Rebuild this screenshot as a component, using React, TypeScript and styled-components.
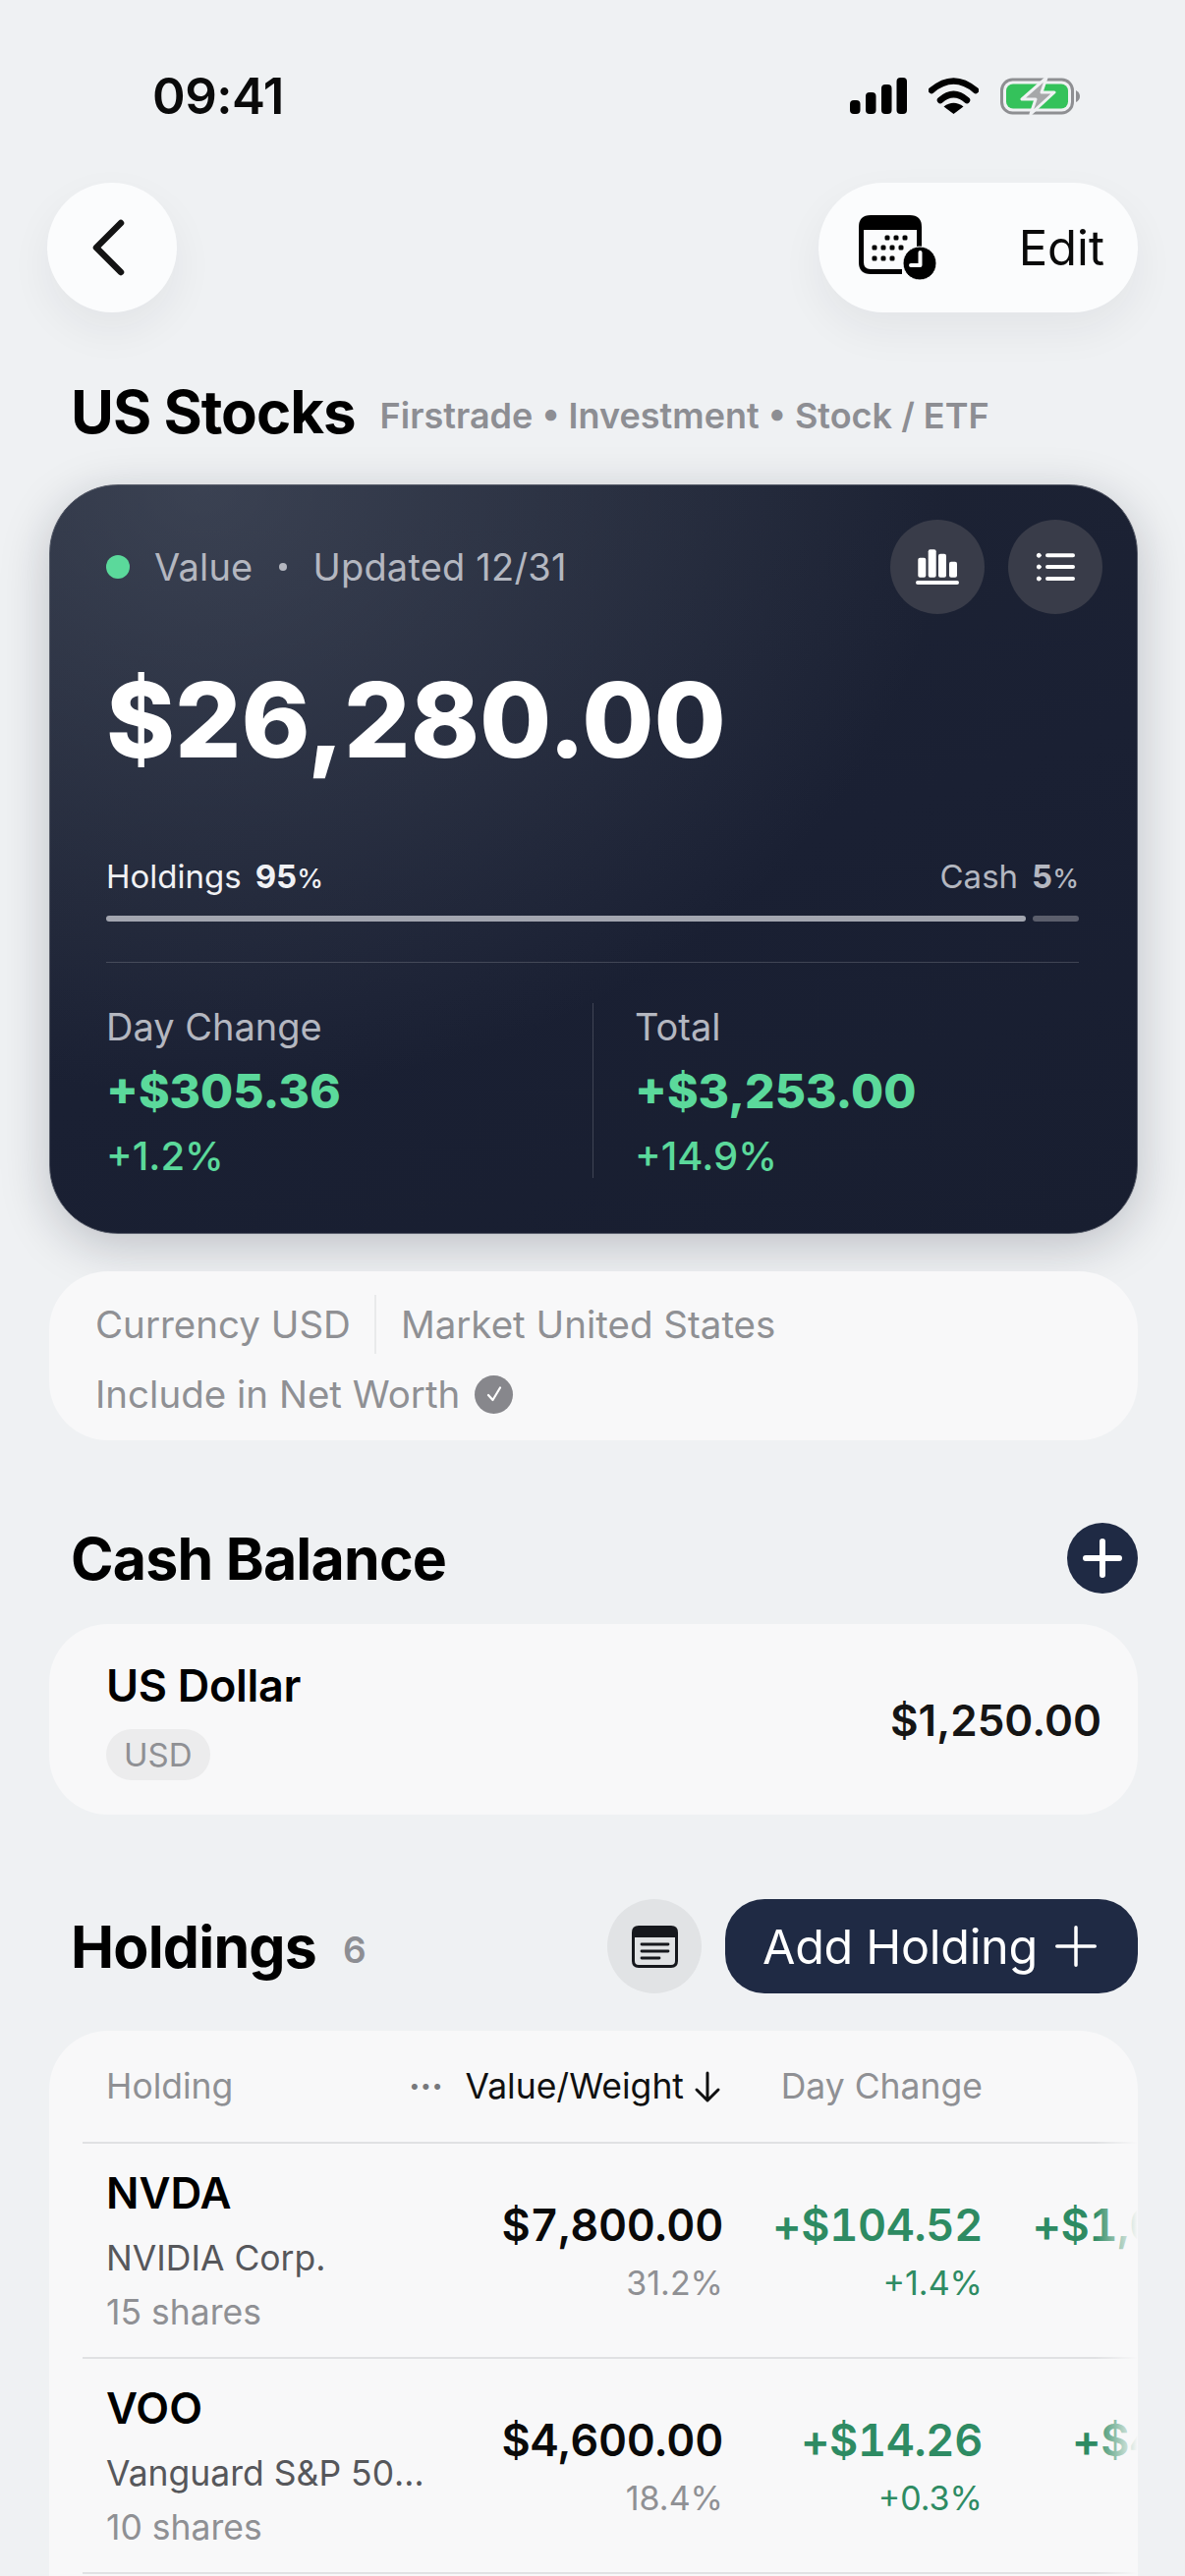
import styled, { createGlobalStyle } from "styled-components";

const GlobalStyle = createGlobalStyle`
  html, body {
    margin: 0;
    padding: 0;
    background: #eff1f3;
  }
  * {
    box-sizing: border-box;
  }
`;

const Page = styled.div`
  position: relative;
  width: 1206px;
  height: 2622px;
  overflow: hidden;
  padding: 67px 48px 0 50px;
  background: #eff1f3;
  font-family: Inter, "Noto Sans", sans-serif;
  color: #000;
`;

const StatusBar = styled.div`
  display: flex;
  align-items: center;
  justify-content: space-between;
  height: 60px;
  padding: 0 58px 0 105px;
`;

const Time = styled.div`
  font-size: 51px;
  font-weight: 600;
  letter-spacing: -0.5px;
  color: #0a0a0a;
`;

const StatusIcons = styled.div`
  display: flex;
  align-items: center;
  gap: 22px;
`;

const NavRow = styled.div`
  display: flex;
  align-items: center;
  justify-content: space-between;
  margin: 59px 0 0 -2px;
`;

const RoundButton = styled.div`
  display: flex;
  align-items: center;
  justify-content: center;
  width: 132px;
  height: 132px;
  padding-right: 6px;
  border-radius: 50%;
  background: #fbfcfd;
  box-shadow: 0 18px 44px rgba(30, 35, 50, 0.06);
`;

const PillButton = styled.div`
  display: flex;
  align-items: center;
  justify-content: space-between;
  width: 325px;
  height: 132px;
  padding: 0 34px 0 41px;
  border-radius: 66px;
  background: #fbfcfd;
  box-shadow: 0 18px 44px rgba(30, 35, 50, 0.06);
  font-size: 49px;
  color: #0a0a0a;
`;

const TitleRow = styled.div`
  display: flex;
  align-items: center;
  gap: 25px;
  margin: 64px 0 0 22px;
  height: 75px;
`;

const Title = styled.div`
  font-size: 60px;
  font-weight: 700;
  letter-spacing: -1px;
  line-height: 75px;
  white-space: nowrap;
`;

const Subtitle = styled.div`
  margin-top: 6px;
  font-size: 36px;
  font-weight: 600;
  color: #8d8e93;
  white-space: nowrap;
`;

const ValueCard = styled.div`
  margin-top: 36px;
  height: 763px;
  padding: 35px 35px 0 57px;
  border-radius: 70px;
  background:
    radial-gradient(ellipse 760px 620px at 14% 0%, rgba(90, 98, 115, 0.48), rgba(90, 98, 115, 0) 100%),
    linear-gradient(160deg, #1e2434 0%, #1a2033 55%, #181e30 100%);
  border: 1px solid #5b606d;
  box-shadow: 0 12px 50px rgba(20, 25, 40, 0.22);
  color: #fff;
`;

const CardTop = styled.div`
  display: flex;
  align-items: center;
  justify-content: space-between;
  height: 96px;
`;

const CardMeta = styled.div`
  display: flex;
  align-items: center;
  font-size: 38px;
  letter-spacing: 0.2px;
  color: #b4b7c0;
`;

const Dot = styled.span`
  width: 24px;
  height: 24px;
  margin-right: 25px;
  border-radius: 50%;
  background: #5bd99b;
`;

const MetaSep = styled.span`
  width: 8px;
  height: 8px;
  margin: 0 26px 0 27px;
  border-radius: 50%;
  background: #b4b7c0;
`;

const CardActions = styled.div`
  display: flex;
  gap: 24px;
`;

const GlassButton = styled.div`
  display: flex;
  align-items: center;
  justify-content: center;
  width: 96px;
  height: 96px;
  border-radius: 50%;
  background: #393c49;
`;

const BigValue = styled.div`
  margin-top: 44px;
  font-size: 106px;
  font-weight: 800;
  line-height: 128px;
`;

const AllocRow = styled.div`
  display: flex;
  align-items: center;
  justify-content: space-between;
  margin: 74px 1px 0 0;
  font-size: 33px;
  line-height: 42px;
  padding-right: 23px;
`;

const AllocLabel = styled.span<{ $dim?: boolean }>`
  color: ${(p) => (p.$dim ? "#b4b7c0" : "#f0f1f4")};
  b {
    margin-left: 14px;
    font-weight: 700;
  }
  small {
    font-size: 27px;
    font-weight: 500;
  }
`;

const AllocBar = styled.div`
  display: flex;
  gap: 7px;
  margin: 16px 24px 0 0;
  height: 6px;
`;

const AllocFill = styled.div<{ $grow: number; $colour: string }>`
  flex: ${(p) => p.$grow} 0 0;
  border-radius: 3px;
  background: ${(p) => p.$colour};
`;

const CardDivider = styled.div`
  height: 1px;
  margin: 41px 24px 0 0;
  background: rgba(255, 255, 255, 0.17);
`;

const Stats = styled.div`
  display: grid;
  grid-template-columns: 495px 1fr;
  margin: 41px 24px 0 0;
  height: 175px;
`;

const Stat = styled.div<{ $split?: boolean }>`
  ${(p) => (p.$split ? "border-left: 1px solid rgba(255,255,255,0.17); padding-left: 42px;" : "")}
`;

const StatLabel = styled.div`
  margin-top: 1px;
  font-size: 38px;
  line-height: 46px;
  color: #b4b7c0;
`;

const StatValue = styled.div`
  margin-top: 14px;
  font-size: 48px;
  font-weight: 800;
  line-height: 58px;
  color: #5bd99b;
`;

const StatPct = styled.div`
  margin-top: 15px;
  font-size: 40px;
  font-weight: 500;
  line-height: 44px;
  color: #5bd99b;
`;

const InfoCard = styled.div`
  margin-top: 38px;
  height: 172px;
  padding: 24px 48px 0 47px;
  border-radius: 60px;
  background: #f8f8f9;
  font-size: 38.5px;
  color: #8f9094;
`;

const InfoRow = styled.div`
  display: flex;
  align-items: center;
  height: 60px;
  & + & {
    margin-top: 11px;
  }
`;

const InfoDivider = styled.span`
  width: 2px;
  height: 60px;
  margin: 0 25px 0 24px;
  background: #e9eaeb;
`;

const CheckBadge = styled.span`
  display: inline-flex;
  align-items: center;
  justify-content: center;
  width: 39px;
  height: 39px;
  margin-left: 15px;
  border-radius: 50%;
  background: #87878c;
`;

const SectionHead = styled.div<{ $top: number }>`
  display: flex;
  align-items: center;
  justify-content: space-between;
  margin: ${(p) => p.$top}px 0 0 22px;
`;

const SectionTitle = styled.div`
  font-size: 59px;
  font-weight: 700;
  letter-spacing: -0.8px;
  white-space: nowrap;
`;

const AddCircle = styled.div`
  display: flex;
  align-items: center;
  justify-content: center;
  width: 72px;
  height: 72px;
  border-radius: 50%;
  background: #1f2a44;
`;

const CashCard = styled.div`
  display: flex;
  align-items: center;
  justify-content: space-between;
  margin-top: 31px;
  height: 194px;
  padding: 0 37px 0 58px;
  border-radius: 60px;
  background: #f8f8f9;
`;

const CashName = styled.div`
  font-size: 45px;
  font-weight: 600;
  line-height: 54px;
  letter-spacing: -0.3px;
`;

const Chip = styled.span`
  display: inline-block;
  margin-top: 17px;
  height: 52px;
  padding: 0 18px;
  border-radius: 26px;
  background: #ececed;
  font-size: 33px;
  line-height: 52px;
  color: #8f9094;
`;

const CashAmount = styled.div`
  margin-top: 2px;
  font-size: 44px;
  font-weight: 600;
  color: #151515;
`;

const HeadLeft = styled.div`
  display: flex;
  align-items: center;
`;

const CountLabel = styled.span`
  margin: 6px 0 0 27px;
  font-size: 37px;
  font-weight: 600;
  color: #8d8e93;
`;

const HeadRight = styled.div`
  display: flex;
  align-items: center;
  gap: 24px;
`;

const DocButton = styled.div`
  display: flex;
  align-items: center;
  justify-content: center;
  width: 96px;
  height: 96px;
  border-radius: 50%;
  background: #e1e3e5;
`;

const AddButton = styled.div`
  display: flex;
  align-items: center;
  justify-content: space-between;
  width: 420px;
  height: 96px;
  padding: 0 42px 0 38px;
  border-radius: 40px;
  background: #1f2a44;
  color: #fff;
  font-size: 48.5px;
  letter-spacing: -0.3px;
`;

const TableCard = styled.div`
  position: relative;
  margin-top: 38px;
  height: 640px;
  padding-left: 34px;
  border-radius: 60px 60px 0 0;
  background: #f8f8f9;
  overflow: hidden;
`;

const Fade = styled.div`
  position: absolute;
  top: 112px;
  right: 0;
  bottom: 0;
  width: 44px;
  background: linear-gradient(90deg, rgba(248, 248, 249, 0), #f8f8f9);
`;

const TableRow = styled.div<{ $head?: boolean }>`
  display: grid;
  grid-template-columns: 330px 298px 264px 305px;
  width: 1221px;
  height: ${(p) => (p.$head ? "115px" : "219px")};
  padding-left: 24px;
  border-bottom: 2px solid #e0e1e3;
  align-items: center;
`;

const HeadCell = styled.div<{ $dark?: boolean; $right?: boolean }>`
  display: flex;
  align-items: center;
  justify-content: ${(p) => (p.$right ? "flex-end" : "flex-start")};
  min-width: 0;
  font-size: 35.5px;
  color: ${(p) => (p.$dark ? "#101010" : "#8f9094")};
  white-space: nowrap;
  svg {
    flex-shrink: 0;
  }
`;

const Dots = styled.span`
  flex-shrink: 0;
  margin-right: 22px;
  font-size: 19px;
  line-height: 1;
  letter-spacing: 1px;
  color: #77787c;
`;

const NameCell = styled.div`
  min-width: 0;
`;

const Ticker = styled.div`
  font-size: 44px;
  font-weight: 600;
  line-height: 54px;
`;

const FullName = styled.div`
  margin-top: 18px;
  font-size: 35.5px;
  line-height: 44px;
  color: #56575b;
  white-space: nowrap;
  overflow: hidden;
  text-overflow: ellipsis;
`;

const Shares = styled.div`
  margin-top: 11px;
  font-size: 35.5px;
  line-height: 44px;
  color: #8f9094;
`;

const NumCell = styled.div`
  text-align: right;
  white-space: nowrap;
`;

const NumMain = styled.div<{ $gain?: boolean }>`
  font-size: 45px;
  font-weight: 600;
  line-height: 56px;
  letter-spacing: -0.3px;
  font-variant-numeric: tabular-nums;
  color: ${(p) => (p.$gain ? "#2e8b63" : "#0a0a0a")};
`;

const NumSub = styled.div<{ $gain?: boolean }>`
  margin-top: 11px;
  font-size: 34px;
  line-height: 40px;
  color: ${(p) => (p.$gain ? "#2e8b63" : "#8f9094")};
`;

const holdings = [
  {
    ticker: "NVDA",
    name: "NVIDIA Corp.",
    shares: "15 shares",
    value: "$7,800.00",
    weight: "31.2%",
    day: "+$104.52",
    dayPct: "+1.4%",
    total: "+$1,020.00",
    totalPct: "+15.0%",
  },
  {
    ticker: "VOO",
    name: "Vanguard S&P 500 ETF",
    shares: "10 shares",
    value: "$4,600.00",
    weight: "18.4%",
    day: "+$14.26",
    dayPct: "+0.3%",
    total: "+$420.00",
    totalPct: "+10.0%",
  },
];

function SignalIcon() {
  return (
    <svg width="58" height="37" viewBox="0 0 58 37">
      <rect x="0" y="23" width="10.5" height="14" rx="4" fill="#000" />
      <rect x="16" y="15" width="10.5" height="22" rx="4" fill="#000" />
      <rect x="32" y="7" width="10.5" height="30" rx="4" fill="#000" />
      <rect x="47.5" y="0" width="10.5" height="37" rx="4" fill="#000" />
    </svg>
  );
}

function WifiIcon() {
  return (
    <svg width="51" height="37" viewBox="0 0 51 37" fill="none">
      <path d="M3 13 Q25.5 -6 48 13" stroke="#000" strokeWidth="6.5" strokeLinecap="round" />
      <path d="M12 23 Q25.5 11 39 23" stroke="#000" strokeWidth="6.5" strokeLinecap="round" />
      <path d="M25.5 37 L15.5 29.5 Q25.5 22 35.5 29.5 Z" fill="#000" />
    </svg>
  );
}

function BatteryIcon() {
  return (
    <svg width="82" height="39" viewBox="0 0 82 39" fill="none">
      <rect x="1.5" y="3" width="72" height="34" rx="11" stroke="#8e8f92" strokeWidth="3" />
      <rect x="6" y="7.5" width="63" height="25" rx="7" fill="#34c25b" />
      <path d="M77 14 Q81 16 81 20 Q81 24 77 26 Z" fill="#8e8f92" />
      <path d="M47 1 L22 23 L36 23 L31 38 L55 16 L42 16 Z" fill="#a6a7a9" stroke="#eff1f3" strokeWidth="3" strokeLinejoin="round" />
    </svg>
  );
}

function CalendarClockIcon() {
  const dots = [
    [29, 23], [38, 23], [47, 23],
    [16, 33], [25, 33], [34, 33], [43, 33],
    [16, 44], [25, 44], [34, 44],
  ];
  return (
    <svg width="79" height="66" viewBox="0 0 79 66" fill="none">
      <path
        d="M12 0 H52 Q64 0 64 12 V32 H59 V15 H5 V48 Q5 55 12 55 H44 V60 H12 Q0 60 0 48 V12 Q0 0 12 0 Z"
        fill="#000"
      />
      {dots.map(([x, y]) => (
        <rect key={`${x}-${y}`} x={x - 2.5} y={y - 2.5} width="5" height="5" rx="1.5" fill="#000" />
      ))}
      <circle cx="62" cy="49" r="17" fill="#000" stroke="#fbfcfd" strokeWidth="1" />
      <path d="M62.5 38 V51 H53" stroke="#fbfcfd" strokeWidth="4" strokeLinecap="round" strokeLinejoin="round" />
    </svg>
  );
}

function BarsIcon() {
  return (
    <svg width="48" height="48" viewBox="0 0 48 48" fill="#fff">
      <rect x="4.3" y="14.7" width="8" height="20" rx="2" />
      <rect x="14.7" y="6.3" width="8" height="28.4" rx="2" />
      <rect x="25" y="10.7" width="8" height="24" rx="2" />
      <rect x="36" y="18.7" width="8" height="16" rx="2" />
      <rect x="2" y="38" width="44" height="4" rx="2" />
    </svg>
  );
}

function ListIcon() {
  return (
    <svg width="48" height="48" viewBox="0 0 48 48" fill="#fff" stroke="#fff" strokeLinecap="round">
      <circle cx="7.3" cy="12.3" r="2" />
      <circle cx="7.3" cy="24" r="2" />
      <circle cx="7.3" cy="36" r="2" />
      <path d="M16 12.3 H42 M16 24 H42 M16 36 H42" strokeWidth="4" />
    </svg>
  );
}

function DocIcon() {
  return (
    <svg width="47" height="43" viewBox="0 0 47 43" fill="none">
      <path
        d="M7 0 H40 Q47 0 47 7 V36 Q47 43 40 43 H7 Q0 43 0 36 V7 Q0 0 7 0 Z M3 12 V36 Q3 40 7 40 H40 Q44 40 44 36 V12 Z"
        fill="#16181d"
        fillRule="evenodd"
      />
      <path d="M10 19 H37 M10 26 H37 M10 33 H28" stroke="#16181d" strokeWidth="2.8" strokeLinecap="round" />
    </svg>
  );
}

function PlusIcon({ size, weight }: { size: number; weight: number }) {
  return (
    <svg width={size} height={size} viewBox={`0 0 ${size} ${size}`} fill="none">
      <path
        d={`M${size / 2} ${weight / 2} V${size - weight / 2} M${weight / 2} ${size / 2} H${size - weight / 2}`}
        stroke="#fff"
        strokeWidth={weight}
        strokeLinecap="round"
      />
    </svg>
  );
}

export default function App() {
  return (
    <Page>
      <GlobalStyle />
      <StatusBar>
        <Time>09:41</Time>
        <StatusIcons>
          <SignalIcon />
          <WifiIcon />
          <BatteryIcon />
        </StatusIcons>
      </StatusBar>

      <NavRow>
        <RoundButton>
          <svg width="44" height="60" viewBox="0 0 44 60" fill="none">
            <path d="M34 5 L9 30 L34 55" stroke="#141414" strokeWidth="6.5" strokeLinecap="round" strokeLinejoin="round" />
          </svg>
        </RoundButton>
        <PillButton>
          <CalendarClockIcon />
          <span>Edit</span>
        </PillButton>
      </NavRow>

      <TitleRow>
        <Title>US Stocks</Title>
        <Subtitle>Firstrade • Investment • Stock / ETF</Subtitle>
      </TitleRow>

      <ValueCard>
        <CardTop>
          <CardMeta>
            <Dot />
            Value
            <MetaSep />
            Updated 12/31
          </CardMeta>
          <CardActions>
            <GlassButton>
              <BarsIcon />
            </GlassButton>
            <GlassButton>
              <ListIcon />
            </GlassButton>
          </CardActions>
        </CardTop>
        <BigValue>$26,280.00</BigValue>
        <AllocRow>
          <AllocLabel>
            Holdings<b>95</b>
            <small>%</small>
          </AllocLabel>
          <AllocLabel $dim>
            Cash<b>5</b>
            <small>%</small>
          </AllocLabel>
        </AllocRow>
        <AllocBar>
          <AllocFill $grow={936} $colour="#a3a6b0" />
          <AllocFill $grow={47} $colour="#5b5e6c" />
        </AllocBar>
        <CardDivider />
        <Stats>
          <Stat>
            <StatLabel>Day Change</StatLabel>
            <StatValue>+$305.36</StatValue>
            <StatPct>+1.2%</StatPct>
          </Stat>
          <Stat $split>
            <StatLabel>Total</StatLabel>
            <StatValue>+$3,253.00</StatValue>
            <StatPct>+14.9%</StatPct>
          </Stat>
        </Stats>
      </ValueCard>

      <InfoCard>
        <InfoRow>
          Currency USD
          <InfoDivider />
          Market United States
        </InfoRow>
        <InfoRow>
          Include in Net Worth
          <CheckBadge>
            <svg width="22" height="22" viewBox="0 0 22 22" fill="none">
              <path d="M5 12 L9.5 17 L17 4.5" stroke="#fff" strokeWidth="2.2" strokeLinecap="round" strokeLinejoin="round" />
            </svg>
          </CheckBadge>
        </InfoRow>
      </InfoCard>

      <SectionHead $top={84}>
        <SectionTitle>Cash Balance</SectionTitle>
        <AddCircle>
          <PlusIcon size={40} weight={6} />
        </AddCircle>
      </SectionHead>

      <CashCard>
        <div>
          <CashName>US Dollar</CashName>
          <Chip>USD</Chip>
        </div>
        <CashAmount>$1,250.00</CashAmount>
      </CashCard>

      <SectionHead $top={86}>
        <HeadLeft>
          <SectionTitle>Holdings</SectionTitle>
          <CountLabel>6</CountLabel>
        </HeadLeft>
        <HeadRight>
          <DocButton>
            <DocIcon />
          </DocButton>
          <AddButton>
            Add Holding
            <PlusIcon size={42} weight={3.5} />
          </AddButton>
        </HeadRight>
      </SectionHead>

      <TableCard>
        <TableRow $head>
          <HeadCell>Holding</HeadCell>
          <HeadCell $dark $right>
            <Dots>•••</Dots>
            Value/Weight
            <svg width="40" height="40" viewBox="0 0 40 40" fill="none">
              <path d="M24 6 V34 M13 23 L24 34 L35 23" stroke="#101010" strokeWidth="3" strokeLinecap="round" strokeLinejoin="round" />
            </svg>
          </HeadCell>
          <HeadCell $right>Day Change</HeadCell>
          <HeadCell $right>Total</HeadCell>
        </TableRow>
        {holdings.map((h) => (
          <TableRow key={h.ticker}>
            <NameCell>
              <Ticker>{h.ticker}</Ticker>
              <FullName>{h.name}</FullName>
              <Shares>{h.shares}</Shares>
            </NameCell>
            <NumCell>
              <NumMain>{h.value}</NumMain>
              <NumSub>{h.weight}</NumSub>
            </NumCell>
            <NumCell>
              <NumMain $gain>{h.day}</NumMain>
              <NumSub $gain>{h.dayPct}</NumSub>
            </NumCell>
            <NumCell>
              <NumMain $gain>{h.total}</NumMain>
              <NumSub $gain>{h.totalPct}</NumSub>
            </NumCell>
          </TableRow>
        ))}
        <Fade />
      </TableCard>
    </Page>
  );
}
